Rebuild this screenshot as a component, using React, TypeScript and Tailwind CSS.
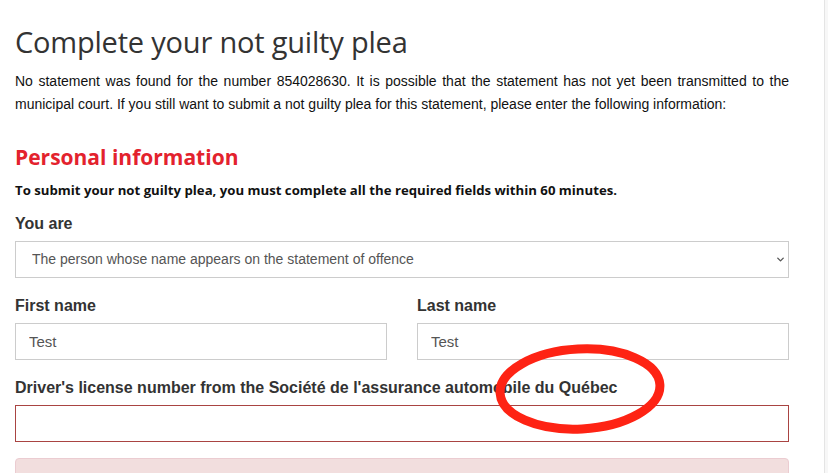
import { ChevronDown } from "lucide-react";

const heading = { fontFamily: '"Open Sans", "Noto Sans", sans-serif' };
const body = { fontFamily: '"Liberation Sans", Arial, sans-serif' };

function Field({
  label,
  value,
  invalid,
}: {
  label: string;
  value?: string;
  invalid?: boolean;
}) {
  return (
    <div className="flex flex-col">
      <label className="mb-[8px] text-[16px] font-bold leading-[18px] text-[#333]">
        {label}
      </label>
      <input
        className={`h-[37px] w-full border px-[13px] text-[15px] text-[#555] outline-none ${
          invalid ? "border-[#a94442]" : "border-[#ccc]"
        }`}
        defaultValue={value}
        style={body}
        type="text"
      />
    </div>
  );
}

export default function App() {
  return (
    <div className="relative h-[473px] w-[828px] overflow-hidden bg-white" style={body}>
      <div className="flex h-full">
        <div className="w-[825px] border-r border-[#e4e4e4] pl-[15px] pr-[35px]">
          <h1
            className="mt-[24px] text-[29px] font-normal leading-[36px] tracking-[-0.2px] text-[#333]"
            style={heading}
          >
            Complete your not guilty plea
          </h1>
          <p className="mt-[10px] text-justify text-[14px] leading-[23px] text-[#111]">
            No statement was found for the number 854028630. It is possible that
            the statement has not yet been transmitted to the municipal court.
            If you still want to submit a not guilty plea for this statement,
            please enter the following information:
          </p>

          <h2
            className="mt-[27px] text-[21px] font-bold leading-[28px] text-[#e3222d]"
            style={heading}
          >
            Personal information
          </h2>
          <p
            className="mt-[9px] text-[13.2px] font-bold leading-[20px] text-[#111]"
            style={heading}
          >
            To submit your not guilty plea, you must complete all the required
            fields within 60 minutes.
          </p>

          <div className="mt-[15px] flex flex-col">
            <label className="mb-[8px] text-[16px] font-bold leading-[18px] text-[#333]">
              You are
            </label>
            <div className="relative">
              <select
                className="h-[37px] w-full appearance-none border border-[#ccc] bg-white pl-[16px] text-[14px] text-[#555] outline-none"
                style={body}
                defaultValue="a"
              >
                <option value="a">
                  The person whose name appears on the statement of offence
                </option>
              </select>
              <ChevronDown
                className="pointer-events-none absolute right-[3px] top-[13px] h-[11px] w-[11px] text-[#555]"
                strokeWidth={3}
              />
            </div>
          </div>

          <div className="mt-[19px] grid grid-cols-2 gap-[30px]">
            <Field label="First name" value="Test" />
            <Field label="Last name" value="Test" />
          </div>

          <div className="mt-[19px]">
            <Field
              label="Driver's license number from the Société de l'assurance automobile du Québec"
              invalid
            />
          </div>

          <div className="mt-[16px] h-[40px] rounded-[4px] border border-[#ebccd1] bg-[#f2dede]" />
        </div>
        <div className="flex-1 bg-[#f7f7f7]" />
      </div>

      <svg
        className="pointer-events-none absolute left-0 top-0"
        height="473"
        width="828"
      >
        <ellipse
          cx="580"
          cy="389"
          fill="none"
          rx="80"
          ry="40"
          stroke="#fe2314"
          strokeWidth="9"
          transform="rotate(-3 580 389)"
        />
      </svg>
    </div>
  );
}
